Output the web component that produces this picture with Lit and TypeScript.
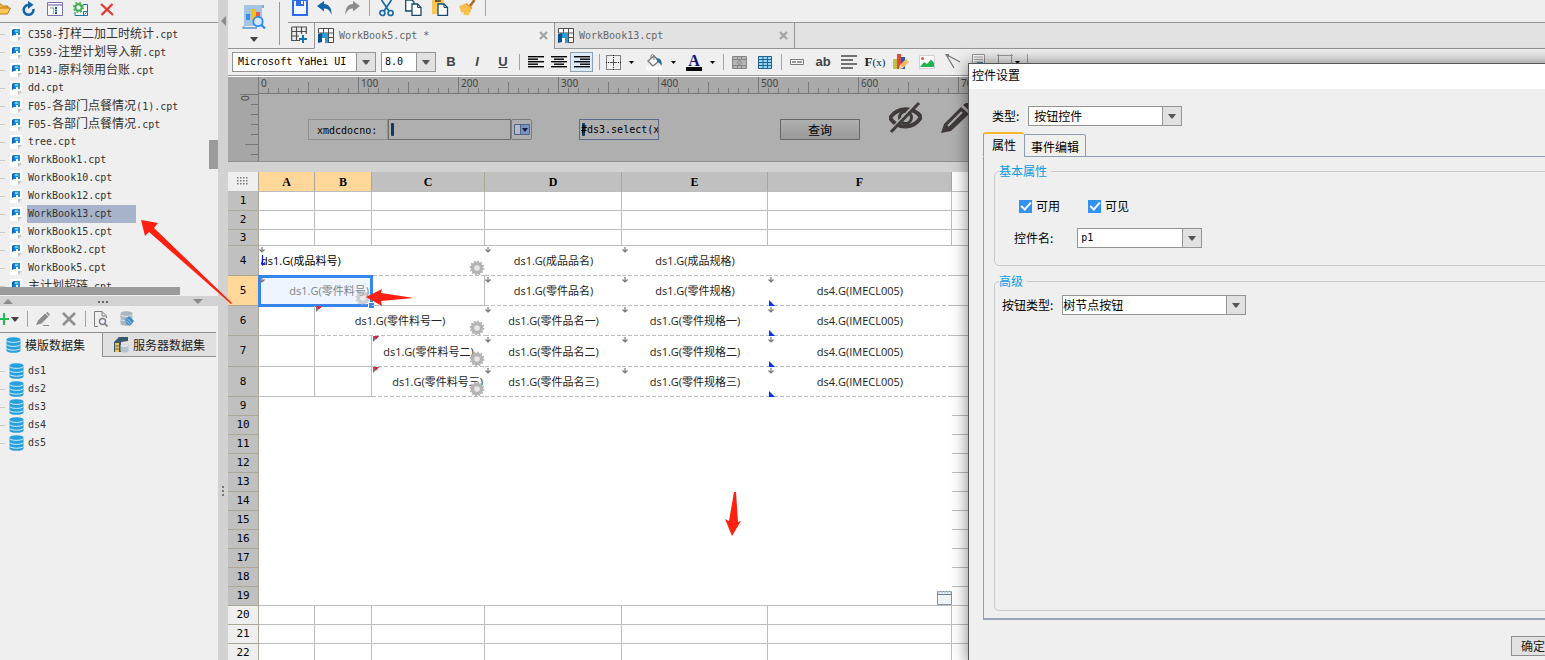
import { LitElement, html, css, svg, nothing } from "lit";
import { customElement, state } from "lit/decorators.js";

/* Latin runs use a 6px-wide fixed font, Chinese runs a 12px one. */
const mono = (text: string) =>
  text
    .split(/([\u3000-\u9fff]+)/)
    .filter((part) => part)
    .map((part) => (/[\u3000-\u9fff]/.test(part) ? html`<span class="han">${part}</span>` : part));

const icon = (w: number, h: number, body: unknown) =>
  html`<svg width=${w} height=${h} viewBox="0 0 ${w} ${h}" aria-hidden="true">${body}</svg>`;

const caret = (color = "#444") => icon(8, 5, svg`<path d="M0 0H8L4.600 4.500H3.400Z" fill=${color} />`);
const smallCaret = () => icon(5, 3, svg`<path d="M0 0H5L2.500 3Z" />`);

const database = icon(15, 16, svg`
  <path d="M.5 2.500C.5 -.5 14.500 -.5 14.500 2.500V13.500C14.500 16.600 .5 16.600 .5 13.500Z" fill="#27a0dc" />
  <path d="M.5 3.500C2 6 13 6 14.500 3.500M.5 7.500C2 10 13 10 14.500 7.500M.5 11.300C2 13.800 13 13.800 14.500 11.300" fill="none" stroke="#d8effa" />`);

const cptFile = icon(13, 15, svg`
  <path d="M0 0H12V10H8V14H0Z" fill="#fff" /><path d="M8 14V10H12Z" fill="#c4c4c4" />
  <path d="M2 3L4 2V8L2 9Z" fill="#0a63b8" /><path d="M4 2H10V8H8V6H6V8H4Z" fill="#1593dd" />
  <path d="M4 4H8" stroke="#fff" stroke-width=".9" /><path d="M4 2V8" stroke="#0a78d0" stroke-width="1.400" />`);

const bookIcon = icon(16, 16, svg`
  <path d="M1 .5H15.500V14.500H1Z" fill="#fff" /><path d="M.5 .5H15.500V14.500H9M.5 .5V5M.5 5H15M5.500 .5V5M10.500 .5V15M10 9.500H15" fill="none" stroke="#4d4d4d" />
  <path d="M0 6L4 5V14L0 15Z" fill="#0c4f8d" /><path d="M4 5H10V15H7V10H4Z" fill="#2f9bd0" />`);

const closeIcon = icon(9, 9, svg`<path d="M1 1L8 8M8 1L1 8" stroke="#a5a5a5" stroke-width="2.400" />`);

const art = {
  folder: icon(16, 12, svg`<path d="M1 11V1H6L7.500 3H13V5" fill="#f6b63e" stroke="#b9781b" /><path d="M1 11L4 5H15.500L12.500 11Z" fill="#fcc75b" stroke="#b9781b" />`),
  refresh: icon(14, 16, svg`<path d="M6.500 4A4.900 4.900 0 1 0 11.400 8" fill="none" stroke="#1265ac" stroke-width="2.600" /><path d="M6 0L11.500 3.800L6 8Z" fill="#1265ac" />`),
  outline: icon(16, 14, svg`<path d="M.5 .5H15.500V13.500H.5Z" fill="#fff" stroke="#7a6fb5" /><path d="M1 3H15" stroke="#7a6fb5" stroke-width="1.200" /><path d="M3 6H6" stroke="#8d8d8d" /><path d="M6.500 5.500V12" stroke="#9ab" /><path d="M8 6H10M8 8.500H10M8 11H10" stroke="#1265ac" stroke-width="1.800" />`),
  gearWindow: icon(16, 15, svg`<path d="M10 2.500H14.500V13.500H2V10" fill="#fff" stroke="#1576a3" /><circle cx="5.500" cy="5.500" r="3.200" fill="none" stroke="#36ad46" stroke-width="2" /><circle cx="5.500" cy="5.500" r="4.800" fill="none" stroke="#36ad46" stroke-width="1.500" stroke-dasharray="1.900 1.900" /><path d="M10.500 9.500H14.500V13.500H10.500Z" fill="#fff" stroke="#1576a3" /><path d="M11.500 12.500L13.500 10.500" stroke="#1576a3" />`),
  cross: icon(14, 13, svg`<path d="M1 1L13 12M12.500 1L1.500 12" stroke="#e4392f" stroke-width="2.300" />`),
  plus: icon(10, 14, svg`<path d="M0 7H9M4 1V13" stroke="#20bd55" stroke-width="2" />`),
  pencilGray: icon(15, 14, svg`<path d="M0 13L2 8.500L9 1.500L12.500 4.500L5.500 11.500Z" fill="#8c8c8c" /><path d="M10 1L11.500 0L14 2.500L13 4Z" fill="#8c8c8c" /><path d="M7 13.500H13" stroke="#8c8c8c" />`),
  crossGray: icon(14, 14, svg`<path d="M1 1L13 13M13 1L1 13" stroke="#8f8f8f" stroke-width="2.600" />`),
  docFind: icon(14, 16, svg`<path d="M4 15.500H.5V.5H8L12.500 5V7M8 .5V5H12" fill="none" stroke="#7d7d7d" /><circle cx="8.500" cy="10.500" r="3" fill="#eef" stroke="#7d7d7d" stroke-width="1.400" /><path d="M10.500 12.500L13.500 15.500" stroke="#7d7d7d" stroke-width="1.600" />`),
  dbPlug: icon(15, 16, svg`<path d="M.5 2.500C.5 -.5 12.500 -.5 12.500 2.500V12.500C12.500 15.500 .5 15.500 .5 12.500Z" fill="#a9b4bd" /><path d="M.5 3.500C2 6 11 6 12.500 3.500M.5 8C2 10.500 11 10.500 12.500 8" fill="none" stroke="#e6eaed" /><path d="M5 9L9 5L14 10L10 14.500Q6 14 5 9Z" fill="#3c8bcb" /><path d="M6 9.500L10 13.500M7.500 8L11.500 12M12 7L14 5" stroke="#d4e8f7" stroke-width=".8" />`),
  server: icon(16, 16, svg`<path d="M1 5L6 0H15V4L8 5V15H1Z" fill="#39586b" /><path d="M2 6H6V15H2Z" fill="#f3c14a" /><path d="M2 9H6M2 12H6" stroke="#39586b" stroke-width=".8" /><path d="M7.500 8.500C8 6.500 15 6.500 15.500 8.500V14C15 16 8 16 7.500 14Z" fill="#b5c3cd" /><ellipse cx="11.500" cy="8.600" rx="3.800" ry="1.300" fill="#dde6ec" />`),
  preview: icon(24, 26, svg`<path d="M2 1H22V4H20V22H2Z" fill="#a3c5e3" /><path d="M20 1H22V4H20Z" fill="#7eaad0" /><path d="M0 24C0 21.500 3 22 3 23H15V25H1Z" fill="#7eaad0" /><path d="M4 10H8V16H4Z" fill="#3b8ef0" /><path d="M9 5H13V16H9Z" fill="#fbbf1d" /><path d="M14 8H18V14H14Z" fill="#ea5a4e" /><circle cx="16" cy="17.500" r="4.700" fill="#d3e9fd" stroke="#2f8bf4" stroke-width="1.800" /><path d="M19 20.500L23 24.500" stroke="#2f8bf4" stroke-width="2.400" />`),
  save: icon(16, 16, svg`<path d="M1 0H15V15H1Z" fill="#f3f7ff" stroke="#2d6cf0" stroke-width="2" /><path d="M4 0H12V6H4Z" fill="#2d6cf0" /><path d="M9 1H11V4H9Z" fill="#fff" />`),
  undo: icon(16, 14, svg`<path d="M0 5L7 0V3C12 3 15 7 14.500 14C13 9.500 11 7.500 7 7.500V10.500Z" fill="#1265ac" />`),
  redo: icon(16, 14, svg`<path d="M16 5L9 0V3C4 3 1 7 1.500 14C3 9.500 5 7.500 9 7.500V10.500Z" fill="#8c8c8c" />`),
  cut: icon(15, 17, svg`<path d="M2.500 0L10 11M12.500 0L5 11" stroke="#1a6aa5" stroke-width="1.700" /><circle cx="3.400" cy="13" r="2.500" fill="none" stroke="#1a6aa5" stroke-width="1.700" /><circle cx="11.600" cy="13" r="2.500" fill="none" stroke="#1a6aa5" stroke-width="1.700" />`),
  copy: icon(17, 16, svg`<path d="M.7 0H7L9 2V11H.7Z" fill="#fff" stroke="#15496e" stroke-width="1.300" /><path d="M7 4H12.500L16 7.500V15.300H7Z" fill="#fff" stroke="#15496e" stroke-width="1.300" /><path d="M12.500 4V7.500H16" fill="none" stroke="#15496e" />`),
  paste: icon(17, 16, svg`<path d="M0 0H12V14H0Z" fill="#fbc658" /><path d="M3 0H9V2H3Z" fill="#7d5a2b" /><path d="M6 4H12L15.500 7.500V15.300H6Z" fill="#fff" stroke="#15496e" stroke-width="1.300" /><path d="M12 4V7.500H15.500" fill="none" stroke="#15496e" />`),
  brush: icon(17, 16, svg`<path d="M11 6L15.500 0" stroke="#a86e2b" stroke-width="2.600" /><path d="M0 6L7 3.500L13 8.500L9.500 15.500L4 14.500L5 12L2.500 13Z" fill="#fac04d" /><path d="M7 3.500L13 8.500" stroke="#e09a32" stroke-width="1.500" />`),
  newTab: icon(17, 17, svg`<path d="M.7 1H15.300V8M.7 1V14.500H9M.7 5.500H15.300M.7 10H8M5.500 1V15M10.500 1V8" fill="none" stroke="#4d4d4d" stroke-width="1.200" /><path d="M12 9V17M8 13H16" stroke="#1672ad" stroke-width="2" />`),
  borders: icon(15, 15, svg`<path d="M.5 .5H14.500V14.500H.5ZM0 7.500H15M7.500 0V15" fill="none" stroke="#111" stroke-dasharray="1 1" /><path d="M4 7.500H11M7.500 4V11" stroke="#555" />`),
  fill: icon(17, 16, svg`<path d="M2 7L8 2L13 7L7 12Z" fill="#f7f7f7" stroke="#7c7c7c" stroke-width="1.300" /><path d="M5 5V1.500Q6.500 -.5 8 1.500V6" fill="none" stroke="#7c7c7c" /><path d="M10 4Q17 4 15.500 12Q13 8 11.500 8Z" fill="#2e6e9c" /><path d="M0 12.500H16V16H0Z" fill="#fff" />`),
  merge: icon(15, 13, svg`<path d="M.5 .5H14.500V12.500H.5Z" fill="#b4b4b4" stroke="#858585" /><path d="M0 3.500H15M0 9.500H15M5.500 0V3M9.500 0V3M5.500 10V13M9.500 10V13" stroke="#858585" /><circle cx="7.500" cy="6.500" r="1.800" fill="none" stroke="#858585" />`),
  grid: icon(14, 13, svg`<path d="M0 0H14V13H0Z" fill="#8fd6f4" /><path d="M.5 .5H13.500V12.500H.5ZM0 3.500H14M0 6.500H14M0 9.500H14M5 0V13M9.500 0V13" fill="none" stroke="#27608c" />`),
  field: icon(14, 6, svg`<path d="M.5 .5H13.500V5.500H.5Z" fill="#f6f6f6" stroke="#7b7b7b" /><path d="M2 3H6M7 3H12" stroke="#7b7b7b" stroke-width="1.400" />`),
  lines: icon(16, 14, svg`<path d="M0 1H16M0 5H12M0 9H16M0 13H12" stroke="#4a4a4a" stroke-width="1.600" />`),
  chart: icon(16, 16, svg`<path d="M0 5H5V15H0Z" fill="#b8c545" /><path d="M4 0H8V15H4Z" fill="#e8453d" /><path d="M8 3H12V15H8Z" fill="#205fb0" /><path d="M6 15L7 11L13 5L16 8L10 14Z" fill="#f7b763" /><path d="M6 15L7 11L10 14Z" fill="#f5e3c8" />`),
  image: icon(16, 14, svg`<path d="M.5 .5H15.500V13.500H.5Z" fill="#fff" stroke="#d0d0d0" /><circle cx="3.500" cy="3.500" r="1.500" fill="#ee5040" /><path d="M1 12L5 7L8 9L12 4.500L15 8V12Z" fill="#25b14f" />`),
  slash: icon(16, 16, svg`<path d="M9 14L1 .5L15 8" fill="none" stroke="#777" stroke-width="1.300" /><path d="M0 0H4V3Z" fill="#777" />`),
  report: icon(14, 16, svg`<path d="M.5 .5H12.500V15.500H.5Z" fill="#fff" stroke="#999" /><path d="M2 3H11M2 5.500H11M2 8H11" stroke="#aaa" /><path d="M5 8H11V12H5Z" fill="#438fd0" />`),
  frame: icon(16, 16, svg`<path d="M0 1.500H16M1.500 0V16M14.500 0V16" stroke="#999" fill="none" />`),
  eye: icon(33, 32, svg`<path d="M1 16C8 5 24 4 32 15C25 27 9 28 1 16Z" fill="none" stroke="#403b3a" stroke-width="4" /><circle cx="16.500" cy="15.500" r="6" fill="none" stroke="#403b3a" stroke-width="3" /><path d="M27 2L2 29" stroke="#b0b0b0" stroke-width="4" /><path d="M30 1L2 30" stroke="#403b3a" stroke-width="3" />`),
  pencil: icon(34, 34, svg`<path d="M0 31L3 22L20 5L28 12L10 29Z" fill="#403b3a" /><path d="M22 3L25 1H30L33 5V8L30 10Z" fill="#403b3a" /><path d="M7 24L21 10" stroke="#b0b0b0" stroke-width="2" />`),
  gear: icon(16, 16, svg`<circle cx="8" cy="8" r="4.500" fill="#e6e6e6" stroke="#b4b4b4" stroke-width="3.400" /><circle cx="8" cy="8" r="6.600" fill="none" stroke="#b4b4b4" stroke-width="1.600" stroke-dasharray="1.800 1.656" />`),
  down: icon(6, 6, svg`<path d="M3 0V5M.5 2.500L3 5L5.500 2.500" fill="none" stroke="#777" stroke-width="1.200" />`),
  corner: icon(6, 6, svg`<path d="M0 0H6L0 6Z" fill="#7d6f74" /><path d="M1 0H6L3 3.500Z" fill="#f0143c" />`),
  blueCorner: icon(6, 6, svg`<path d="M0 0L6 6H0Z" fill="#0433ff" />`),
  calendar: icon(15, 14, svg`<path d="M.5 .5H14.500V13.500H.5Z" fill="#eef3f8" stroke="#8593a0" /><path d="M1 1.500H14" stroke="#c4d3df" stroke-width="2" stroke-dasharray="2 1" /><path d="M0 3.500H15" stroke="#71808e" />`),
};

const alignLines = (kind: "left" | "center" | "right") =>
  icon(16, 12, [0, 1, 2, 3, 4].map((i) => {
    const w = i % 2 ? 10 : 16;
    const x = kind === "left" ? 0 : kind === "right" ? 16 - w : (16 - w) / 2;
    return svg`<rect x=${x} y=${i * 2.5} width=${w} height="1.400" fill="#000" />`;
  }));

interface Cell { t?: string; span?: number; rows?: number; cls?: string; marks?: string[] }
interface Row { n: number; h: number; cells: Cell[]; hot?: boolean; off?: boolean }

const blank = (): Cell[] => Array.from({ length: 6 }, () => ({}));
const detail = (suffix: string): Cell[] => [
  { t: `ds1.G(零件品名${suffix})`, cls: "dash", marks: ["down"] },
  { t: `ds1.G(零件规格${suffix})`, cls: "dash", marks: ["down"] },
  { t: "ds4.G(IMECL005)", cls: "dash", marks: ["down", "blue"] },
];

const ROWS: Row[] = [
  { n: 1, h: 19, cells: blank() },
  { n: 2, h: 19, cells: blank() },
  { n: 3, h: 16, cells: blank() },
  { n: 4, h: 30, cells: [
    { t: "ds1.G(成品料号)", span: 3, cls: "dash start", marks: ["down", "parent", "gear"] },
    { t: "ds1.G(成品品名)", cls: "dash", marks: ["down"] },
    { t: "ds1.G(成品规格)", cls: "dash", marks: ["down"] },
    { cls: "dash" },
  ] },
  { n: 5, h: 30, hot: true, cells: [
    { t: "ds1.G(零件料号)", span: 2, cls: "selected", marks: ["down", "gear"] },
    {}, ...detail(""),
  ] },
  { n: 6, h: 30, cells: [{}, { t: "ds1.G(零件料号一)", span: 2, cls: "dash", marks: ["corner", "gear"] }, ...detail("一")] },
  { n: 7, h: 31, cells: [{}, {}, { t: "ds1.G(零件料号二)", cls: "dash", marks: ["corner", "gear"] }, ...detail("二")] },
  { n: 8, h: 30, cells: [{}, {}, { t: "ds1.G(零件料号三)", cls: "dash end", marks: ["corner", "gear"] }, ...detail("三")] },
  { n: 9, h: 19, cells: [{ span: 6, rows: 11, cls: "open", marks: ["calendar"] }] },
  ...Array.from({ length: 10 }, (_, i) => ({ n: 10 + i, h: 19, cells: [] as Cell[] })),
  ...[20, 21, 22].map((n) => ({ n, h: 19, off: true, cells: blank() })),
];

const MARKS: Record<string, unknown> = {
  down: art.down, corner: art.corner, blue: art.blueCorner, gear: art.gear, calendar: art.calendar,
  parent: icon(5, 12, svg`<path d="M1.500 0V10M0 7.500L1.500 10L4 7.500" stroke="#0a18e6" stroke-width="1.200" fill="none" />`),
};

@customElement("app-root")
export class AppRoot extends LitElement {
  @state() private selectedFile = "WorkBook13.cpt";

  static styles = css`
    :host { display: block; position: relative; height: 100vh; overflow: hidden; background: #efefef; color: #222;
      font: 12px/16px "Noto Sans CJK SC", sans-serif; }
    * { box-sizing: border-box; }
    svg { display: block; flex: none; }
    button { display: flex; align-items: center; justify-content: center; flex: none; margin: 0; padding: 0; border: 0; background: none; color: inherit; font: inherit; }
    input, select { margin: 0; padding: 0; border: 0; border-radius: 0; background: none; color: #000; font: inherit; outline: 0; min-width: 0; }
    .mono { font: 10px/16px "DejaVu Sans Mono", "Noto Sans CJK SC", monospace; white-space: pre; }
    .han { font-family: "Noto Sans CJK SC", sans-serif; font-size: 12px; line-height: 16px; }
    .sep { flex: none; width: 1px; height: 16px; background: #a3a3a3; }

    .app { display: grid; grid-template-columns: 218px 10px minmax(0, 1fr); height: 100%; }
    .side { display: grid; grid-template-rows: 23px 264px 9px 10px 26px 25px 1fr; min-width: 0; overflow: hidden; }
    .bar { display: flex; align-items: center; overflow: hidden; }
    .bar button { width: 26px; height: 20px; }
    .files { border-bottom: 1px solid #959595; padding-bottom: 4px; }
    .files button:first-child { margin-left: -10px; }
    .treebox { display: grid; grid-template-columns: 209px 9px; overflow: hidden; }
    .tree, .sets { list-style: none; margin: 0; padding: 2px 0 0; overflow: hidden; }
    .node { display: flex; align-items: center; height: 18px; }
    .node::before { content: ""; flex: none; width: 5px; height: 1px; margin-right: 5px; background: #cfcbbc; }
    .node svg { margin-right: 4px; }
    .name { height: 18px; line-height: 18px; padding: 0 24px 0 1px; color: #333; white-space: pre; text-decoration: none; }
    .name.on { background: #a7b2cb; }
    .vthumb { height: 29px; margin-top: 117px; background: #9b9b9b; }
    .hthumb { width: 180px; height: 8px; background: #9b9b9b; }
    .split { display: flex; align-items: center; justify-content: space-between; background: #d2d2d2; padding: 0 15px 0 3px; }
    .setbar button:first-child { width: 10px; }
    .setbar .drop { width: 10px; margin-right: 4px; }
    .setbar .sep { margin: 0 2px 0 3px; }
    .settabs { display: flex; border-top: 1px solid #8f8f8f; margin-right: 2px; }
    .settabs button { justify-content: flex-start; gap: 4px; color: #222; }
    .settabs .on { width: 102px; padding-left: 6px; }
    .settabs .more { flex: 1; padding-left: 10px; background: #e0e0e0; border-left: 1px solid #8f8f8f; border-bottom: 1px solid #8f8f8f; }
    .sets { padding-top: 5px; }
    .sets .node::before { margin-right: 4px; }
    .sets .node svg { margin-right: 3px; }
    .rail { display: flex; flex-direction: column; align-items: center; justify-content: space-between; padding: 16px 0 163px; background: #d2d2d2; }

    .main { display: flex; flex-direction: column; min-width: 0; overflow: hidden; background: #d2d2d2; }
    .head { display: grid; grid-template-columns: 52px 8px minmax(0, 1fr); height: 49px; flex: none; background: #efefef; }
    .previewbtn { width: 100%; flex-direction: column; gap: 7px; padding-bottom: 2px; height: 43px; margin: 2px 0 0; border-right: 1px solid #9a9a9a; }
    .pv, .headgap { border-bottom: 1px solid #959595; }
    .quick { height: 22px; padding-bottom: 6px; }
    .quick button { width: 27px; }
    .quick button:first-child { width: 23px; }
    .quick .sep { margin: 0 3px 0 4px; }
    .tabs { display: flex; height: 27px; border-top: 1px solid #959595; background: #e2e2e2; }
    .tabs .add { width: 26px; padding: 0 4px 2px 0; background: #efefef; border-bottom: 1px solid #959595; }
    .tab { display: flex; align-items: center; gap: 5px; width: 240px; padding: 0 6px 0 3px; border-left: 1px solid #959595; border-bottom: 1px solid #959595; color: #666; }
    .tab .mono { flex: 1; text-align: left; }
    .tab.on { background: #efefef; border-bottom-color: #efefef; }
    .tabrest { flex: 1; border-left: 1px solid #959595; border-bottom: 1px solid #959595; }
    .format { display: flex; align-items: center; flex: none; height: 28px; padding: 0 0 1px 4px; background: #efefef; border-bottom: 1px solid #fff; box-shadow: inset 0 -1px #999; overflow: hidden; }
    .format button { width: 26px; height: 20px; }
    .combo { display: grid; grid-template-columns: minmax(0, 1fr) 19px; height: 20px; flex: none; border: 1px solid #949494; background: #fff; }
    .combo select { grid-area: 1 / 1 / 2 / 3; appearance: none; height: 18px; padding-left: 5px; }
    .combo .arrow { grid-area: 1 / 2; display: flex; align-items: center; justify-content: center; border-left: 1px solid #949494; background: #e1e1e1; pointer-events: none; }
    .font { width: 144px; margin-right: 5px; }
    .size { width: 55px; margin-right: 2px; }
    .combo.size select { padding-left: 3px; }
    .format .letter { color: #444; font: bold 13px/16px "Liberation Sans", sans-serif; }
    .format .ital { font-style: italic; }
    .under { text-decoration: underline; }
    .format .sep { margin: 0 2px 0 3px; }
    .format .letter + .sep { margin-right: 4px; }
    .format .al + .sep { margin-left: 6px; }
    .format .wide + .sep { margin-left: 1px; }
    .format .al { width: 23px; }
    .format .al.on { background: #dcebfa; border: 1px solid #8d9fb0; }
    .format .wide { width: 40px; gap: 8px; justify-content: flex-start; padding-left: 4px; }
    .format .tight { width: 34px; gap: 2px; padding-left: 5px; }
    .fontcolor { width: 16px; height: 17px; border-bottom: 4px solid #000; color: #10107a; font: bold 16px/13px "Liberation Serif", serif; }
    .format .fx { color: #222; font: bold 13px/16px "Liberation Serif", serif; }
    .small { font-size: 11px; font-weight: normal; }

    .params { display: grid; grid-template: 17px 67px / 12px 18px minmax(0, 1fr); flex: none; background: #a6a6a6; border-bottom: 1px solid #8f8f8f; overflow: hidden; }
    .params svg text { font: 10px "Noto Sans", sans-serif; fill: #444; }
    .hruler { grid-area: 1 / 3; background: #a9a9a9; border-bottom: 1px solid #777; overflow: hidden; }
    .vruler { grid-area: 2 / 2; overflow: hidden; }
    .form { grid-area: 2 / 3; display: flex; align-items: flex-start; padding: 25px 0 0 49px; background: #afafaf; border-left: 1px solid #777; overflow: hidden; }
    .form > * { flex: none; }
    .plabel { width: 80px; height: 21px; padding: 3px 0 0 8px; border: 1px solid #909090; color: #000; }
    .form .pick { width: 21px; height: 21px; border: 1px solid #7d7d7d; border-radius: 2px; }
    .caretbox { display: flex; align-items: center; border: 1px solid #6e6e6e; width: 123px; height: 21px; padding-left: 2px; }
    .caretbox input { flex: 1; }
    .caretbox::before { content: ""; flex: none; width: 3px; height: 13px; background: #123a5e; border-radius: 1px; }
    .caretbox.expr { width: 80px; margin: 0 121px 0 47px; border-color: #5a6c88; }
    .expr::before { margin-right: -4px; }
    .query { width: 80px; height: 21px; border: 1px solid #666; background: linear-gradient(#b0b0b0, #999); color: #000; }
    .form .eye { margin: -17px 19px 0 29px; }
    .form .pen { margin-top: -17px; }

    .sheet { width: 100%; flex: none; margin-top: 10px; table-layout: fixed; border-collapse: separate; border-spacing: 0; background: #fff; }
    .sheet th, .sheet td { padding: 0; border: 0 solid #bdbdbd; border-width: 0 1px 1px 0; }
    .sheet th { background: #c0c0c0; border-color: #aaa796; color: #000; font: 11px/14px "DejaVu Sans Mono", monospace; }
    .sheet thead th { height: 20px; font: bold 12px/14px "Liberation Serif", serif; border-bottom-color: #bdbdbd; }
    .sheet thead .rest { background: #fff; }
    .sheet th.hot { background: #ffd899; }
    .sheet th.off, .sheet thead .all { background: #efefef; }
    .sheet td { position: relative; text-align: center; font: 11px/15px "Open Sans", "Noto Sans CJK SC", sans-serif; color: #222; white-space: nowrap; }
    .sheet .dash { border-width: 0 0 1px; border-color: transparent; background: repeating-linear-gradient(90deg, #bdbdbd 0 4px, transparent 4px 6px) 0 100% / 100% 1px no-repeat border-box; }
    .sheet .open { border-right-width: 0; }
    .sheet .start { text-align: left; padding-left: 2px; color: #000; }
    .sheet .end { text-align: right; padding-right: 2px; }
    .sheet .selected { text-align: right; padding-right: 2px; background: #eef5fe; color: #7c8288; outline: 3px solid #3585ec; outline-offset: -2px; }
    .sheet .selected::after { content: ""; position: absolute; right: -3px; bottom: -3px; width: 5px; height: 5px; background: #3585ec; outline: 1px solid #fff; }
    .sheet .rest { border-right-width: 0; }
    .mark { position: absolute; }
    .down { left: 0; top: 1px; }
    .corner { left: 1px; top: 0; }
    .blue { left: 1px; bottom: -1px; }
    .gear { right: 0; bottom: -1px; }
    .selected .gear { opacity: .6; }
    .parent { left: 2px; top: 9px; }
    .calendar { right: 0; bottom: 0; }
    .tall { height: var(--h); }

    .dialog { position: absolute; left: 968px; right: -80px; top: 63px; bottom: -4px; display: flex; flex-direction: column; border: 1px solid #555; background: #efefef; box-shadow: 0 0 15px rgba(0, 0, 0, .5); color: #000; }
    .title { margin: 0; height: 25px; padding: 3px 3px 0; background: #fff; font: inherit; }
    .line { display: flex; align-items: center; height: 20px; }
    .type { margin: 17px 0 7px 23px; gap: 9px; }
    .type .combo { width: 154px; }
    .dtabs { display: flex; align-items: flex-end; height: 24px; margin-left: 14px; border-bottom: 1px solid #8d9db5; }
    .dtabs button { border: 1px solid #8d9db5; }
    .dtabs .on { width: 41px; height: 25px; margin-bottom: -1px; padding-bottom: 1px; border-top: 2px solid #f8b62d; border-bottom-color: #efefef; border-right: 0; border-radius: 3px 3px 0 0; background: #efefef; }
    .dtabs .off { width: 62px; height: 23px; margin-bottom: -1px; padding-top: 3px; border-radius: 0 2px 0 0; background: #f2f0ed; }
    .panel { flex: 1; display: flex; flex-direction: column; gap: 7px; margin-left: 14px; padding: 6px 0 7px 10px; border-left: 1px solid #8d9db5; border-bottom: 2px solid #9aa5b8; }
    .group { margin: 0; min-width: 0; padding: 0; border: 1px solid #c9c9c9; border-radius: 5px; }
    .group legend { margin-left: 4px; padding: 0 4px 0 0; line-height: 16px; color: #0a9be0; }
    .basic { height: 103px; }
    .adv { flex: 1; }
    .checks { gap: 28px; margin: 17px 0 0 24px; }
    .check { display: flex; align-items: center; gap: 4px; }
    .check input { appearance: none; width: 13px; height: 13px; display: grid; place-items: center; background: #3391f2; }
    .check input::before { content: ""; width: 8px; height: 4px; border: solid #fff; border-width: 0 0 2px 2px; rotate: -48deg; translate: 0 -1px; }
    .cname { margin: 12px 0 0 19px; gap: 24px; }
    .cname .combo { width: 125px; }
    .btype { margin: 6px 0 0 7px; gap: 9px; }
    .btype .combo { width: 184px; }
    .btype select { padding-left: 0; }
    .cname select { padding-left: 3px; }
    .foot { display: flex; justify-content: flex-end; height: 43px; padding: 16px 69px 0 0; flex: none; }
    .foot button { width: 44px; height: 20px; border: 1px solid #8f8f8f; background: #e1e1e1; color: #222; }
    .arrows { position: absolute; left: 0; top: 0; pointer-events: none; }
  `;

  private button(label: string, content: unknown, cls = "") {
    return html`<button class=${cls} aria-label=${label} title=${label}>${content}</button>`;
  }

  private combo(label: string, value: string, cls = "", id = "") {
    return html`<div class="combo ${cls}">
      <select id=${id || nothing} aria-label=${label}><option>${value}</option></select>
      <span class="arrow">${caret("#555")}</span>
    </div>`;
  }

  private renderSide() {
    const files = ["C358-打样二加工时统计.cpt", "C359-注塑计划导入新.cpt", "D143-原料领用台账.cpt", "dd.cpt",
      "F05-各部门点餐情况(1).cpt", "F05-各部门点餐情况.cpt", "tree.cpt", "WorkBook1.cpt", "WorkBook10.cpt",
      "WorkBook12.cpt", "WorkBook13.cpt", "WorkBook15.cpt", "WorkBook2.cpt", "WorkBook5.cpt", "主计划超链.cpt"];
    return html`<aside class="side">
      <div class="bar files">
        ${this.button("打开", art.folder)}${this.button("刷新", art.refresh)}${this.button("目录", art.outline)}
        ${this.button("设置", art.gearWindow)}${this.button("删除", art.cross)}
      </div>
      <div class="treebox">
        <ul class="tree">
          ${files.map((f) => html`<li class="node">${cptFile}<a href="#" class="name mono ${f === this.selectedFile ? "on" : ""}"
            @click=${(e: Event) => { e.preventDefault(); this.selectedFile = f; }}>${mono(f)}</a></li>`)}
        </ul>
        <div class="vthumb"></div>
      </div>
      <div class="hthumb"></div>
      <div class="split">
        ${icon(10, 5, svg`<path d="M0 5L5 0L10 5Z" fill="#8a8a8a" />`)}
        ${icon(11, 3, svg`<path d="M0 1H2V3H0ZM4 1H6V3H4ZM8 1H10V3H8Z" fill="#666" />`)}
        ${icon(10, 5, svg`<path d="M0 0L5 5L10 0Z" fill="#8a8a8a" />`)}
      </div>
      <div class="bar setbar">
        ${this.button("新增", art.plus)}${this.button("新增类型", caret(), "drop")}<span class="sep"></span>
        ${this.button("编辑", art.pencilGray)}${this.button("移除", art.crossGray)}<span class="sep"></span>
        ${this.button("预览数据", art.docFind)}${this.button("连接", art.dbPlug)}
      </div>
      <div class="settabs">
        <button class="on">${database}模版数据集</button><button class="more">${art.server}服务器数据集</button>
      </div>
      <ul class="sets">
        ${["ds1", "ds2", "ds3", "ds4", "ds5"].map((d) => html`<li class="node">${database}<span class="name mono">${d}</span></li>`)}
      </ul>
    </aside>`;
  }

  private renderHead() {
    return html`<header class="head">
      <div class="pv"><button class="previewbtn" aria-label="预览">${art.preview}${caret()}</button></div>
      <div class="headgap"></div>
      <div>
        <div class="bar quick">
          ${this.button("保存", art.save)}${this.button("撤销", art.undo)}${this.button("重做", art.redo)}<span class="sep"></span>
          ${this.button("剪切", art.cut)}${this.button("复制", art.copy)}${this.button("粘贴", art.paste)}${this.button("格式刷", art.brush)}<span class="sep"></span>
        </div>
        <div class="tabs">
          ${this.button("新建", art.newTab, "add")}
          <div class="tab on">${bookIcon}<span class="mono">WorkBook5.cpt *</span>${this.button("关闭", closeIcon)}</div>
          <div class="tab">${bookIcon}<span class="mono">WorkBook13.cpt</span>${this.button("关闭", closeIcon)}</div>
          <div class="tabrest"></div>
        </div>
      </div>
    </header>`;
  }

  private renderFormat() {
    return html`<div class="format">
      ${this.combo("字体", "Microsoft YaHei UI", "font mono")}${this.combo("字号", "8.0", "size mono")}
      ${this.button("加粗", "B", "letter")}${this.button("斜体", "I", "letter ital")}${this.button("下划线", html`<span class="under">U</span>`, "letter")}
      <span class="sep"></span>
      ${this.button("左对齐", alignLines("left"), "al")}${this.button("居中", alignLines("center"), "al")}${this.button("右对齐", alignLines("right"), "al on")}
      <span class="sep"></span>
      ${this.button("边框", html`${art.borders}${smallCaret()}`, "wide")}
      ${this.button("填充", html`${art.fill}${smallCaret()}`, "wide")}
      ${this.button("字体颜色", html`<span class="fontcolor">A</span>${smallCaret()}`, "wide")}
      <span class="sep"></span>
      ${this.button("合并", art.merge)}${this.button("单元格", art.grid)}
      <span class="sep"></span>
      ${this.button("文本框", art.field)}${this.button("文本", "ab", "letter")}${this.button("富文本", art.lines)}
      ${this.button("公式", html`F<span class="small">(x)</span>`, "fx")}${this.button("图表", art.chart)}${this.button("图片", art.image)}
      ${this.button("斜线", art.slash)}${this.button("子报表", art.report)}${this.button("框架", html`${art.frame}${smallCaret()}`, "wide tight")}
      <span class="sep"></span>
    </div>`;
  }

  private renderParams() {
    const ticks = Array.from({ length: 131 }, (_, i) => i);
    return html`<section class="params">
      <div class="hruler">${icon(1310, 17, svg`
        ${ticks.map((i) => svg`<path d="M${i * 10 + .5} ${i % 10 === 0 ? 0 : i % 5 === 0 ? 5 : 11}V17" stroke="#777" />`)}
        ${ticks.filter((i) => i % 10 === 0).map((i) => svg`<text x=${i * 10 + 3} y="10">${i * 10}</text>`)}`)}</div>
      <div class="vruler">${icon(18, 67, svg`
        ${[0, 1, 2, 3, 4, 5, 6].map((i) => svg`<path d="M${i === 0 ? 0 : i === 5 ? 5 : 11} ${i * 10 + .5}H18" stroke="#777" />`)}
        <text transform="translate(9 7) rotate(-90)" x="0" y="0">0</text>`)}</div>
      <div class="form">
        <label class="plabel mono" for="docno">xmdcdocno:</label>
        <div class="caretbox"><input id="docno" class="mono" /></div>
        ${this.button("选择", icon(16, 11, svg`<path d="M.5 .5H15.500V10.500H.5Z" fill="#b5bac4" stroke="#4b648c" /><path d="M6 1H15V10H6Z" fill="#7c93bd" /><path d="M6.500 0V11" stroke="#4b648c" /><path d="M8 4H14L11 8Z" fill="#111b44" />`), "pick")}
        <div class="caretbox expr"><input class="mono" aria-label="表达式" value="#ds3.select(x" /></div>
        <button class="query">查询</button>
        <span class="eye">${art.eye}</span><span class="pen">${art.pencil}</span>
      </div>
    </section>`;
  }

  private renderSheet() {
    return html`<table class="sheet">
      <colgroup>${[31, 56, 57, 113, 137, 146, 184].map((w) => html`<col style="width:${w}px" />`)}<col /></colgroup>
      <thead><tr>
        <th class="all">${icon(30, 12, [0, 1, 2, 3].flatMap((c) => [0, 1, 2].map((r) => svg`<rect x=${9 + c * 3} y=${1 + r * 3} width="1.500" height="1.500" fill="#777" />`)))}</th>
        ${["A", "B", "C", "D", "E", "F"].map((c) => html`<th class=${c < "C" ? "hot" : ""}>${c}</th>`)}<th class="rest"></th>
      </tr></thead>
      <tbody>${ROWS.map((row) => html`<tr class="tall" style="--h:${row.h}px">
        <th class=${row.hot ? "hot" : row.off ? "off" : ""}>${row.n}</th>
        ${row.cells.map((c) => html`<td class=${c.cls ?? ""} colspan=${c.span ?? 1} rowspan=${c.rows ?? 1}>
          ${c.t ?? nothing}${(c.marks ?? []).map((m) => html`<span class="mark ${m}">${MARKS[m]}</span>`)}</td>`)}
        <td class="rest"></td>
      </tr>`)}</tbody>
    </table>`;
  }

  private renderDialog() {
    return html`<section class="dialog" role="dialog" aria-labelledby="dlg">
      <h2 class="title" id="dlg">控件设置</h2>
      <div class="line type"><label for="ctype">类型:</label>${this.combo("类型", "按钮控件", "", "ctype")}</div>
      <div class="dtabs"><button class="on">属性</button><button class="off">事件编辑</button></div>
      <div class="panel">
        <fieldset class="group basic">
          <legend>基本属性</legend>
          <div class="line checks">
            <label class="check"><input type="checkbox" checked />可用</label>
            <label class="check"><input type="checkbox" checked />可见</label>
          </div>
          <div class="line cname"><label for="cname">控件名:</label>${this.combo("控件名", "p1", "mono", "cname")}</div>
        </fieldset>
        <fieldset class="group adv">
          <legend>高级</legend>
          <div class="line btype"><label for="btype">按钮类型:</label>${this.combo("按钮类型", "树节点按钮", "", "btype")}</div>
        </fieldset>
      </div>
      <div class="foot"><button>确定</button></div>
    </section>`;
  }

  render() {
    return html`<div class="app">
        ${this.renderSide()}
        <div class="rail">
          ${icon(5, 10, svg`<path d="M5 0L0 5L5 10Z" fill="#8a8a8a" />`)}
          ${icon(3, 12, svg`<path d="M0 1H2V3H0ZM0 5H2V7H0ZM0 9H2V11H0Z" fill="#777" />`)}
        </div>
        <main class="main">${this.renderHead()}${this.renderFormat()}${this.renderParams()}${this.renderSheet()}</main>
      </div>
      ${this.renderDialog()}
      <svg class="arrows" width="800" height="560" fill="#ff2010" aria-hidden="true">
        <path d="M141 220L158 223L154 228L232 303L231 304L149 232L145 236Z" />
        <path d="M366 297L382 289L381 293L414 298L381 301L382 306Z" />
        <path d="M732 536L741 521L738 522L736 492H734L729 521L725 519Z" />
      </svg>`;
  }
}
